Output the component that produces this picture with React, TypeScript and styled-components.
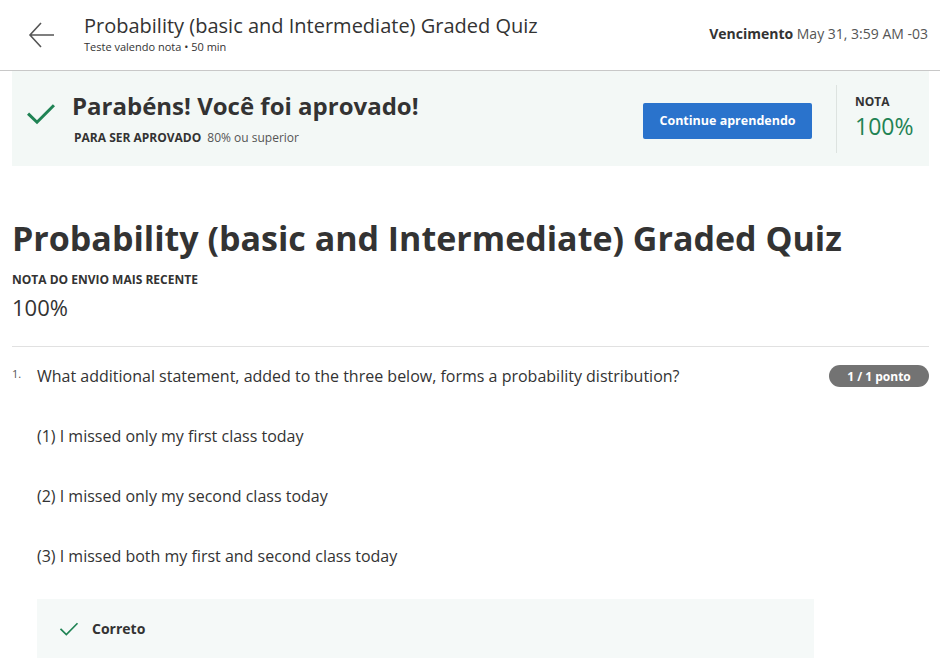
import React from "react";
import styled, { createGlobalStyle } from "styled-components";

const Global = createGlobalStyle`
  html, body { margin: 0; padding: 0; background: #fff; }
  body { font-family: "Open Sans", "Noto Sans", sans-serif; color: #1f1f1f; }
  * { box-sizing: border-box; }
`;

const Page = styled.div`
  width: 940px;
  height: 668px;
  overflow: hidden;
`;

const Header = styled.header`
  height: 71px;
  display: flex;
  align-items: center;
  padding: 0 12px 0 28px;
  border-bottom: 1px solid #c8c8c8;
`;

const BackButton = styled.button`
  width: 28px;
  height: 28px;
  padding: 0;
  margin-right: 28px;
  border: none;
  background: none;
  display: flex;
  align-items: center;
  justify-content: center;
  color: #555;
`;

const HeaderText = styled.div`
  flex: 1;
  display: flex;
  flex-direction: column;
  margin-top: -4px;
`;

const HeaderTitle = styled.div`
  font-size: 20px;
  line-height: 26px;
  color: #333;
`;

const HeaderSub = styled.div`
  font-size: 11px;
  line-height: 15px;
  color: #333;
`;

const Due = styled.div`
  font-size: 14px;
  color: #555;
  margin-top: -4px;
  b { font-weight: 700; color: #333; }
`;

const Main = styled.main`
  padding: 0 11px 0 12px;
`;

const Banner = styled.section`
  height: 95px;
  background: #f3f8f6;
  display: flex;
  align-items: center;
  padding: 0 12px 0 14px;
`;

const BannerCheck = styled.div`
  width: 32px;
  display: flex;
  align-items: center;
  margin-right: 14px;
  margin-top: -10px;
`;

const BannerText = styled.div`
  flex: 1;
  display: flex;
  flex-direction: column;
`;

const BannerTitle = styled.div`
  font-size: 24px;
  font-weight: 700;
  color: #333;
  line-height: 30px;
`;

const BannerSub = styled.div`
  font-size: 12px;
  line-height: 16px;
  color: #555;
  margin-left: 2px;
  margin-top: 9px;
  b { font-weight: 700; color: #333; margin-right: 6px; }
`;

const PrimaryButton = styled.button`
  width: 169px;
  height: 36px;
  background: #2a73cc;
  color: #fff;
  border: none;
  border-radius: 2px;
  font-family: "Open Sans", sans-serif;
  font-weight: 700;
  font-size: 12.5px;
  margin-right: 24px;
  margin-top: 4px;
`;

const Divider = styled.div`
  width: 1px;
  height: 68px;
  background: #dde3e0;
  margin-right: 18px;
`;

const GradeBox = styled.div`
  width: 62px;
  display: flex;
  flex-direction: column;
  margin-top: -5px;
`;

const SmallLabel = styled.div`
  font-size: 12px;
  font-weight: 700;
  color: #333;
  line-height: 16px;
`;

const GreenGrade = styled.div`
  font-size: 23px;
  color: #1f8354;
  line-height: 24px;
  margin-top: 4px;
`;

const QuizTitle = styled.h1`
  margin: 48px 0 0 0;
  font-size: 34px;
  line-height: 48px;
  font-weight: 700;
  color: #333;
`;

const Recent = styled.div`
  margin-top: 10px;
  padding-bottom: 24px;
  border-bottom: 1px solid #e1e1e1;
`;

const RecentValue = styled.div`
  font-size: 22px;
  line-height: 30px;
  color: #333;
  margin-top: 4px;
`;

const Question = styled.div`
  display: flex;
  margin-top: 18px;
`;

const QNum = styled.div`
  width: 25px;
  font-size: 11px;
  color: #555;
  padding-top: 1px;
`;

const QBody = styled.div`
  flex: 1;
  display: flex;
  flex-direction: column;
`;

const QRow = styled.div`
  display: flex;
  justify-content: space-between;
  align-items: flex-start;
`;

const QText = styled.div`
  font-size: 16px;
  line-height: 22px;
  color: #333;
  font-stretch: 92%;
`;

const Badge = styled.span`
  background: #737373;
  color: #fff;
  font-size: 12px;
  font-weight: 700;
  border-radius: 11px;
  height: 22px;
  width: 100px;
  display: flex;
  align-items: center;
  justify-content: center;
`;

const Option = styled.div`
  font-size: 16px;
  line-height: 22px;
  color: #333;
  margin-top: 38px;
`;

const Feedback = styled.div`
  width: 777px;
  height: 59px;
  margin-top: 32px;
  background: #f5f9f8;
  display: flex;
  align-items: center;
  padding: 0 0 0 22px;
  gap: 13px;
  font-size: 14px;
  font-weight: 700;
  color: #333;
`;

const Check = ({ size, stroke }: { size: number; stroke: number }) => (
  <svg width={size} height={size} viewBox="0 0 24 24" fill="none">
    <path d="M2.5 12.5 L8.8 18.6 L21.5 5.8" stroke="#1f8354" strokeWidth={stroke} strokeLinecap="square" />
  </svg>
);

export default function App() {
  return (
    <Page>
      <Global />
      <Header>
        <BackButton aria-label="Voltar">
          <svg width="28" height="28" viewBox="0 0 28 28" fill="none">
            <path d="M2 14 H26 M13 2 L2 14 L13 26" stroke="#555" strokeWidth="1.6" />
          </svg>
        </BackButton>
        <HeaderText>
          <HeaderTitle>Probability (basic and Intermediate) Graded Quiz</HeaderTitle>
          <HeaderSub>Teste valendo nota • 50 min</HeaderSub>
        </HeaderText>
        <Due>
          <b>Vencimento</b> May 31, 3:59 AM -03
        </Due>
      </Header>
      <Main>
        <Banner>
          <BannerCheck>
            <Check size={30} stroke={2.4} />
          </BannerCheck>
          <BannerText>
            <BannerTitle>Parabéns! Você foi aprovado!</BannerTitle>
            <BannerSub>
              <b>PARA SER APROVADO</b>80% ou superior
            </BannerSub>
          </BannerText>
          <PrimaryButton>Continue aprendendo</PrimaryButton>
          <Divider />
          <GradeBox>
            <SmallLabel>NOTA</SmallLabel>
            <GreenGrade>100%</GreenGrade>
          </GradeBox>
        </Banner>
        <QuizTitle>Probability (basic and Intermediate) Graded Quiz</QuizTitle>
        <Recent>
          <SmallLabel>NOTA DO ENVIO MAIS RECENTE</SmallLabel>
          <RecentValue>100%</RecentValue>
        </Recent>
        <Question>
          <QNum>1.</QNum>
          <QBody>
            <QRow>
              <QText>What additional statement, added to the three below, forms a probability distribution?</QText>
              <Badge>1 / 1 ponto</Badge>
            </QRow>
            <Option>(1) I missed only my first class today</Option>
            <Option>(2) I missed only my second class today</Option>
            <Option>(3) I missed both my first and second class today</Option>
            <Feedback>
              <Check size={20} stroke={2} />
              Correto
            </Feedback>
          </QBody>
        </Question>
      </Main>
    </Page>
  );
}
